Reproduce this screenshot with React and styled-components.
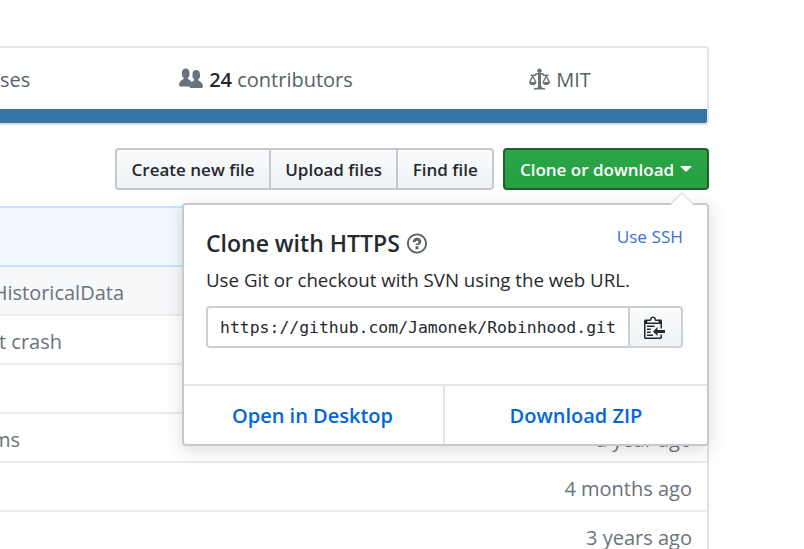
import styled, { createGlobalStyle } from 'styled-components'

const GlobalStyle = createGlobalStyle`
  html, body {
    margin: 0;
    height: 549px;
    overflow: hidden;
    background: #fff;
  }
  body {
    font-family: "Open Sans", "Noto Sans", sans-serif;
    font-size: 20px;
    color: #24292e;
  }
  * {
    box-sizing: border-box;
  }
`

const Page = styled.div`
  width: 719px;
  margin-left: -10px;
  padding-top: 46px;
`

const Summary = styled.div`
  height: 79px;
  display: flex;
  flex-direction: column;
  border: 2px solid #e1e4e8;
  border-bottom-color: #dcdcdc;
  border-radius: 4px;
  overflow: hidden;
`

const Stats = styled.div`
  flex: 1;
  padding-top: 1px;
  display: grid;
  grid-template-columns: repeat(3, 294px);
  justify-content: end;
`

const Stat = styled.div`
  display: flex;
  align-items: center;
  justify-content: center;
  gap: 6px;
  white-space: nowrap;
  color: #586069;
  svg {
    fill: #6a737d;
  }
`

const Count = styled.span`
  font-weight: 600;
  color: #24292e;
`

const LangBar = styled.div`
  height: 14px;
  background: #3572a5;
`

const Actions = styled.div`
  margin: 23px 0 16px;
  display: flex;
  justify-content: flex-end;
  gap: 9px;
`

const ButtonGroup = styled.div`
  display: flex;
`

const Button = styled.button`
  height: 42px;
  margin-left: -2px;
  padding: 0 14.3px;
  border: 2px solid #c6c8cb;
  background: linear-gradient(#fafbfc, #eff3f6);
  font: 600 17px "Open Sans", "Noto Sans", sans-serif;
  color: #24292e;
  white-space: nowrap;
  &:first-child {
    border-radius: 4px 0 0 4px;
  }
  &:last-child {
    border-radius: 0 4px 4px 0;
  }
`

const CloneWrap = styled.div`
  position: relative;
`

const CloneButton = styled.button`
  height: 42px;
  width: 206px;
  display: flex;
  align-items: center;
  justify-content: center;
  gap: 6px;
  border: 2px solid #1f5f30;
  border-radius: 4px;
  background: linear-gradient(#2aa646, #279f43);
  font: 600 17px "Open Sans", "Noto Sans", sans-serif;
  color: #fff;
  white-space: nowrap;
  &::after {
    content: '';
    border: 6px solid transparent;
    border-top-color: #fff;
    border-bottom: 0;
  }
`

const Popover = styled.div`
  position: absolute;
  z-index: 2;
  top: 55px;
  right: 0;
  width: 527px;
  height: 243px;
  display: flex;
  flex-direction: column;
  background: #fff;
  border: 2px solid #c6cacd;
  border-radius: 4px;
  box-shadow: 0 4px 18px rgba(27, 31, 35, 0.16);
  &::before,
  &::after {
    content: '';
    position: absolute;
    right: 13px;
    border: 12px solid transparent;
    border-top: 0;
  }
  &::before {
    top: -13px;
    border-bottom-color: #dfe2e5;
  }
  &::after {
    top: -11px;
    border-bottom-color: #fff;
  }
`

const PopoverBody = styled.div`
  flex: 1;
  padding: 21px 24px 0 22px;
`

const TitleRow = styled.div`
  height: 35px;
  display: flex;
  align-items: flex-start;
  justify-content: space-between;
`

const Title = styled.h4`
  margin: 0;
  display: flex;
  align-items: center;
  gap: 7px;
  font-size: 23px;
  line-height: 34px;
  font-weight: 600;
  svg {
    fill: #586069;
  }
`

const SshLink = styled.a`
  font-size: 17.2px;
  line-height: 22px;
  color: #3b70dd;
`

const Hint = styled.p`
  margin: 0;
  font-size: 18.7px;
  line-height: 38px;
`

const UrlGroup = styled.div`
  height: 42px;
  margin-top: 7px;
  display: flex;
`

const UrlInput = styled.div`
  flex: 1;
  display: flex;
  align-items: center;
  padding-left: 12px;
  border: 2px solid #ccd0d3;
  border-radius: 4px 0 0 4px;
  font-family: "DejaVu Sans Mono", monospace;
  font-size: 16.45px;
`

const CopyButton = styled.button`
  width: 55px;
  margin-left: -2px;
  padding: 0 2px 0 0;
  display: flex;
  align-items: center;
  justify-content: center;
  border: 2px solid #ccd0d3;
  border-radius: 0 4px 4px 0;
  background: linear-gradient(#fafbfc, #eff3f6);
  svg {
    fill: #24292e;
  }
`

const PopoverFooter = styled.div`
  height: 60px;
  display: grid;
  grid-template-columns: 259px 1fr;
  border-top: 2px solid #e1e4e8;
`

const FooterLink = styled.a`
  display: flex;
  align-items: center;
  justify-content: center;
  font-size: 20px;
  font-weight: 600;
  color: #0366d6;
  &:first-child {
    padding-right: 2px;
  }
  & + & {
    border-left: 2px solid #e1e4e8;
  }
`

const FileTable = styled.div`
  border-right: 2px solid #dfe2e5;
`

const CommitBar = styled.div`
  height: 61px;
  background: #f1f8ff;
  border: 2px solid #c8e1ff;
`

const Row = styled.div`
  height: 49px;
  display: flex;
  align-items: center;
  justify-content: space-between;
  padding: 4px 15px 0 0;
  background: ${props => (props.$shaded ? '#f6f8fa' : '#fff')};
  border-bottom: 2px solid #eaecef;
  color: #6a737d;
`

const Message = styled.div`
  width: ${props => props.$width}px;
  display: flex;
  justify-content: flex-end;
  overflow: hidden;
  white-space: nowrap;
`

const PeopleIcon = () => (
  <svg width="24" height="24" viewBox="0 0 16 16">
    <path d="M16 12.999c0 .439-.45 1-1 1H7.995c-.539 0-.994-.447-.995-.999H1c-.54 0-1-.561-1-1 0-2.634 3-4 3-4s.229-.409 0-1c-.841-.621-1.058-.59-1-3 .058-2.419 1.367-3 2.5-3s2.442.58 2.5 3c.058 2.41-.159 2.379-1 3-.229.59 0 1 0 1s1.549.711 2.42 2.088C9.196 9.369 10 8.999 10 8.999s.229-.409 0-1c-.841-.62-1.058-.59-1-3 .058-2.419 1.367-3 2.5-3s2.437.581 2.495 3c.059 2.41-.158 2.38-1 3-.229.59 0 1 0 1s3.005 1.366 3.005 4" />
  </svg>
)

const LawIcon = () => (
  <svg width="21" height="24" viewBox="0 0 14 16">
    <path d="M7 4c-.83 0-1.5-.67-1.5-1.5S6.17 1 7 1s1.5.67 1.5 1.5S7.83 4 7 4zm7 6c0 1.11-.89 2-2 2h-1c-1.11 0-2-.89-2-2l2-4h-1c-.55 0-1-.45-1-1H8v8c.42 0 1 .45 1 1h1c.42 0 1 .45 1 1H3c0-.55.58-1 1-1h1c.42 0 1-.45 1-1V5H5c0 .55-.45 1-1 1H3l2 4c0 1.11-.89 2-2 2H2c-1.11 0-2-.89-2-2l2-4H1V5h3c0-.55.45-1 1-1h4c.55 0 1 .45 1 1h3v1h-1l2 4zM2.5 7L1 10h3L2.5 7zM13 10l-1.5-3-1.5 3h3z" />
  </svg>
)

const QuestionIcon = () => (
  <svg width="20" height="23" viewBox="0 0 14 16">
    <path d="M6 10h2v2H6v-2zm4-3.5C10 8.64 8 9 8 9H6c0-.55.45-1 1-1h.5c.28 0 .5-.22.5-.5v-1c0-.28-.22-.5-.5-.5h-1c-.28 0-.5.22-.5.5V7H4c0-1.5 1.5-3 3-3s3 1 3 2.5zM7 2.3c3.14 0 5.7 2.56 5.7 5.7s-2.56 5.7-5.7 5.7A5.71 5.71 0 0 1 1.3 8c0-3.14 2.56-5.7 5.7-5.7zM7 1C3.14 1 0 4.14 0 8s3.14 7 7 7 7-3.14 7-7-3.14-7-7-7z" />
  </svg>
)

const ClippyIcon = () => (
  <svg width="21" height="24" viewBox="0 0 14 16">
    <path d="M2 13h4v1H2v-1zm5-6H2v1h5V7zm2 3V8l-3 3 3 3v-2h5v-2H9zM4.5 9H2v1h2.5V9zM2 12h2.5v-1H2v1zm9 1h1v2c-.02.28-.11.52-.3.7-.19.18-.42.28-.7.3H1c-.55 0-1-.45-1-1V4c0-.55.45-1 1-1h3c0-1.11.89-2 2-2 1.11 0 2 .89 2 2h3c.55 0 1 .45 1 1v5h-1V6H1v9h10v-2zM2 5h8c0-.55-.45-1-1-1H8c-.55 0-1-.45-1-1s-.45-1-1-1-1 .45-1 1-.45 1-1 1H3c-.55 0-1 .45-1 1z" />
  </svg>
)

const rows = [
  { message: 'Add getHistoricalData', width: 134, shaded: true },
  { message: 'Fix test crash', width: 72 },
  { message: '', width: 0 },
  { message: 'Fix import problems', width: 30, time: 'a year ago' },
  { message: '', width: 0, time: '4 months ago' },
  { message: '', width: 0, time: '3 years ago' },
]

function App() {
  return (
    <Page>
      <GlobalStyle />
      <Summary>
        <Stats>
          <Stat>
            <span>
              <Count>100</Count> releases
            </span>
          </Stat>
          <Stat>
            <PeopleIcon />
            <span>
              <Count>24</Count> contributors
            </span>
          </Stat>
          <Stat>
            <LawIcon />
            MIT
          </Stat>
        </Stats>
        <LangBar />
      </Summary>
      <Actions>
        <ButtonGroup>
          <Button>Create new file</Button>
          <Button>Upload files</Button>
          <Button>Find file</Button>
        </ButtonGroup>
        <CloneWrap>
          <CloneButton>Clone or download</CloneButton>
          <Popover>
            <PopoverBody>
              <TitleRow>
                <Title>
                  Clone with HTTPS
                  <QuestionIcon />
                </Title>
                <SshLink>Use SSH</SshLink>
              </TitleRow>
              <Hint>Use Git or checkout with SVN using the web URL.</Hint>
              <UrlGroup>
                <UrlInput>https://github.com/Jamonek/Robinhood.git</UrlInput>
                <CopyButton>
                  <ClippyIcon />
                </CopyButton>
              </UrlGroup>
            </PopoverBody>
            <PopoverFooter>
              <FooterLink>Open in Desktop</FooterLink>
              <FooterLink>Download ZIP</FooterLink>
            </PopoverFooter>
          </Popover>
        </CloneWrap>
      </Actions>
      <FileTable>
        <CommitBar />
        {rows.map((row, i) => (
          <Row key={i} $shaded={row.shaded}>
            <Message $width={row.width}>{row.message}</Message>
            <span>{row.time}</span>
          </Row>
        ))}
      </FileTable>
    </Page>
  )
}

export default App
